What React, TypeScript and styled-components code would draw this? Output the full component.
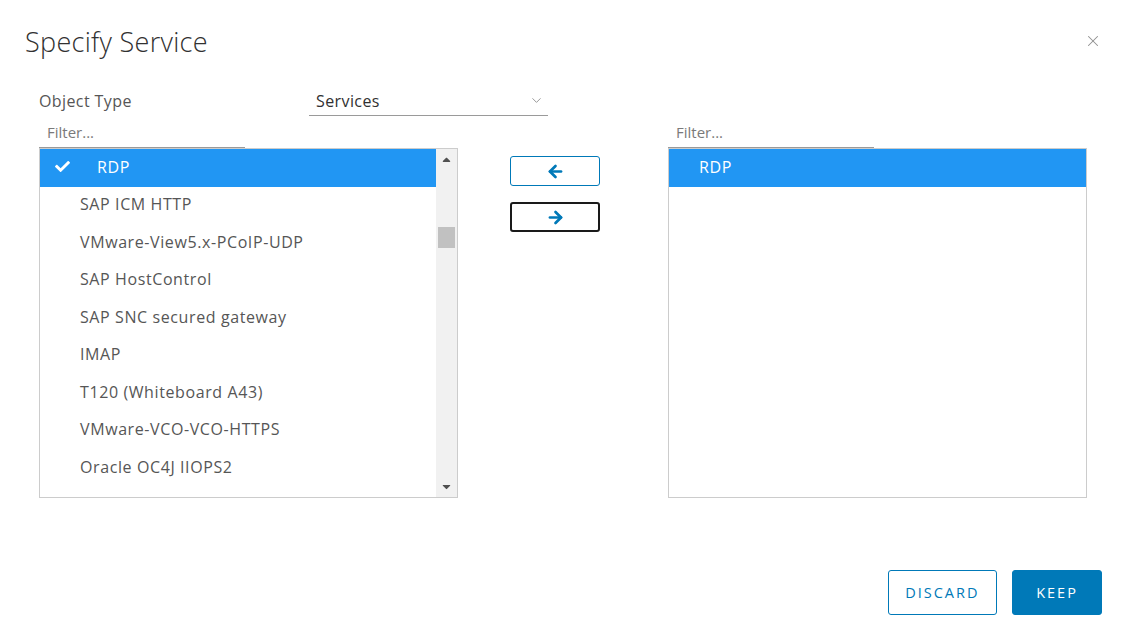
import { createGlobalStyle } from "styled-components";
import styled from "styled-components";
import { FaCheck, FaCaretUp, FaCaretDown } from "react-icons/fa";
import { ArrowLeft, ArrowRight, ChevronDown, X } from "lucide-react";

const GlobalStyle = createGlobalStyle`
  html, body {
    margin: 0;
    padding: 0;
    background: #fff;
  }
  body {
    font-family: "Open Sans", "Noto Sans", sans-serif;
    color: #565656;
  }
  * { box-sizing: border-box; }
`;

const Modal = styled.div`
  width: 1125px;
  height: 639px;
  padding: 22px 23px 24px 25px;
  display: flex;
  flex-direction: column;
`;

const Header = styled.header`
  display: flex;
  align-items: center;
  justify-content: space-between;
  height: 38px;
`;

const Title = styled.h1`
  margin: 0;
  font-size: 27px;
  font-weight: 300;
  color: #313131;
  letter-spacing: 0.3px;
`;

const CloseButton = styled.button`
  border: 0;
  background: none;
  padding: 0;
  display: flex;
  color: #8f8f8f;
  cursor: pointer;
`;

const Body = styled.div`
  padding-left: 14px;
  margin-top: 26px;
  flex: 1;
`;

const TypeRow = styled.div`
  display: flex;
  align-items: center;
  height: 30px;
`;

const Label = styled.span`
  width: 270px;
  font-size: 16px;
  letter-spacing: 0.4px;
  color: #565656;
`;

const Select = styled.div`
  width: 239px;
  height: 30px;
  display: flex;
  align-items: center;
  justify-content: space-between;
  padding: 0 4px 0 7px;
  border-bottom: 1px solid #9a9a9a;
  font-size: 16px;
  letter-spacing: 0.4px;
  color: #313131;
  svg { color: #8a8a8a; }
`;

const Columns = styled.div`
  display: grid;
  grid-template-columns: 419px 210px 419px;
`;

const Column = styled.div`
  display: flex;
  flex-direction: column;
`;

const Filter = styled.div`
  width: 206px;
  height: 32px;
  padding: 0 8px;
  display: flex;
  align-items: center;
  border-bottom: 1px solid #9a9a9a;
  font-size: 15px;
  color: #7a7a7a;
`;

const ListBox = styled.div`
  height: 350px;
  border: 1px solid #cccccc;
  display: flex;
`;

const Items = styled.div`
  flex: 1;
  display: flex;
  flex-direction: column;
`;

const Item = styled.div<{ $selected?: boolean; $indent: number }>`
  height: 37.5px;
  flex: none;
  display: flex;
  align-items: center;
  padding-left: ${(p) => p.$indent}px;
  padding-bottom: 2px;
  font-size: 16px;
  letter-spacing: 0.6px;
  color: ${(p) => (p.$selected ? "#ffffff" : "#565656")};
  background: ${(p) => (p.$selected ? "#2196f3" : "transparent")};
`;

const CheckMark = styled.span`
  width: 43px;
  padding-left: 1px;
  display: flex;
  align-items: center;
  color: #fff;
`;

const ScrollTrack = styled.div`
  width: 21px;
  background: #f1f1f1;
  display: flex;
  flex-direction: column;
  align-items: center;
  justify-content: space-between;
  padding: 4px 0 4px;
  color: #505050;
  position: relative;
`;

const Thumb = styled.div`
  position: absolute;
  left: 2px;
  top: 78px;
  width: 17px;
  height: 21px;
  background: #c1c1c1;
`;

const Middle = styled.div`
  display: flex;
  flex-direction: column;
  align-items: flex-start;
  gap: 16px;
  padding: 40px 0 0 52px;
`;

const MoveButton = styled.button<{ $focused?: boolean }>`
  width: 90px;
  height: 30px;
  display: flex;
  align-items: center;
  justify-content: center;
  background: #fff;
  color: #0079b8;
  border: ${(p) => (p.$focused ? "2px solid #1a1a1a" : "1px solid #0079b8")};
  border-radius: 3px;
  cursor: pointer;
`;

const Footer = styled.footer`
  display: flex;
  justify-content: flex-end;
  gap: 15px;
`;

const ActionButton = styled.button<{ $primary?: boolean }>`
  height: 45px;
  padding: 0 ${(p) => (p.$primary ? 22 : 16.5)}px;
  min-width: 90px;
  font-family: "Open Sans", "Noto Sans", sans-serif;
  font-size: 14.5px;
  font-weight: 500;
  letter-spacing: 2px;
  border-radius: 3px;
  border: 1px solid #0079b8;
  background: ${(p) => (p.$primary ? "#0079b8" : "#fff")};
  color: ${(p) => (p.$primary ? "#fff" : "#0079b8")};
  cursor: pointer;
`;

const services = [
  "SAP ICM HTTP",
  "VMware-View5.x-PCoIP-UDP",
  "SAP HostControl",
  "SAP SNC secured gateway",
  "IMAP",
  "T120 (Whiteboard A43)",
  "VMware-VCO-VCO-HTTPS",
  "Oracle OC4J IIOPS2",
];

export default function App() {
  return (
    <>
      <GlobalStyle />
      <Modal>
        <Header>
          <Title>Specify Service</Title>
          <CloseButton aria-label="Close">
            <X size={18} strokeWidth={1.4} />
          </CloseButton>
        </Header>
        <Body>
          <TypeRow>
            <Label>Object Type</Label>
            <Select>
              Services
              <ChevronDown size={15} strokeWidth={1.4} />
            </Select>
          </TypeRow>
          <Columns>
            <Column>
              <Filter>Filter...</Filter>
              <ListBox>
                <Items>
                  <Item $selected $indent={14}>
                    <CheckMark>
                      <FaCheck size={15} />
                    </CheckMark>
                    RDP
                  </Item>
                  {services.map((s) => (
                    <Item key={s} $indent={40}>
                      {s}
                    </Item>
                  ))}
                </Items>
                <ScrollTrack>
                  <FaCaretUp size={13} />
                  <Thumb />
                  <FaCaretDown size={13} />
                </ScrollTrack>
              </ListBox>
            </Column>
            <Middle>
              <MoveButton aria-label="Remove">
                <ArrowLeft size={19} strokeWidth={3.4} />
              </MoveButton>
              <MoveButton $focused aria-label="Add">
                <ArrowRight size={19} strokeWidth={3.4} />
              </MoveButton>
            </Middle>
            <Column>
              <Filter>Filter...</Filter>
              <ListBox>
                <Items>
                  <Item $selected $indent={30}>
                    RDP
                  </Item>
                </Items>
              </ListBox>
            </Column>
          </Columns>
        </Body>
        <Footer>
          <ActionButton>DISCARD</ActionButton>
          <ActionButton $primary>KEEP</ActionButton>
        </Footer>
      </Modal>
    </>
  );
}
